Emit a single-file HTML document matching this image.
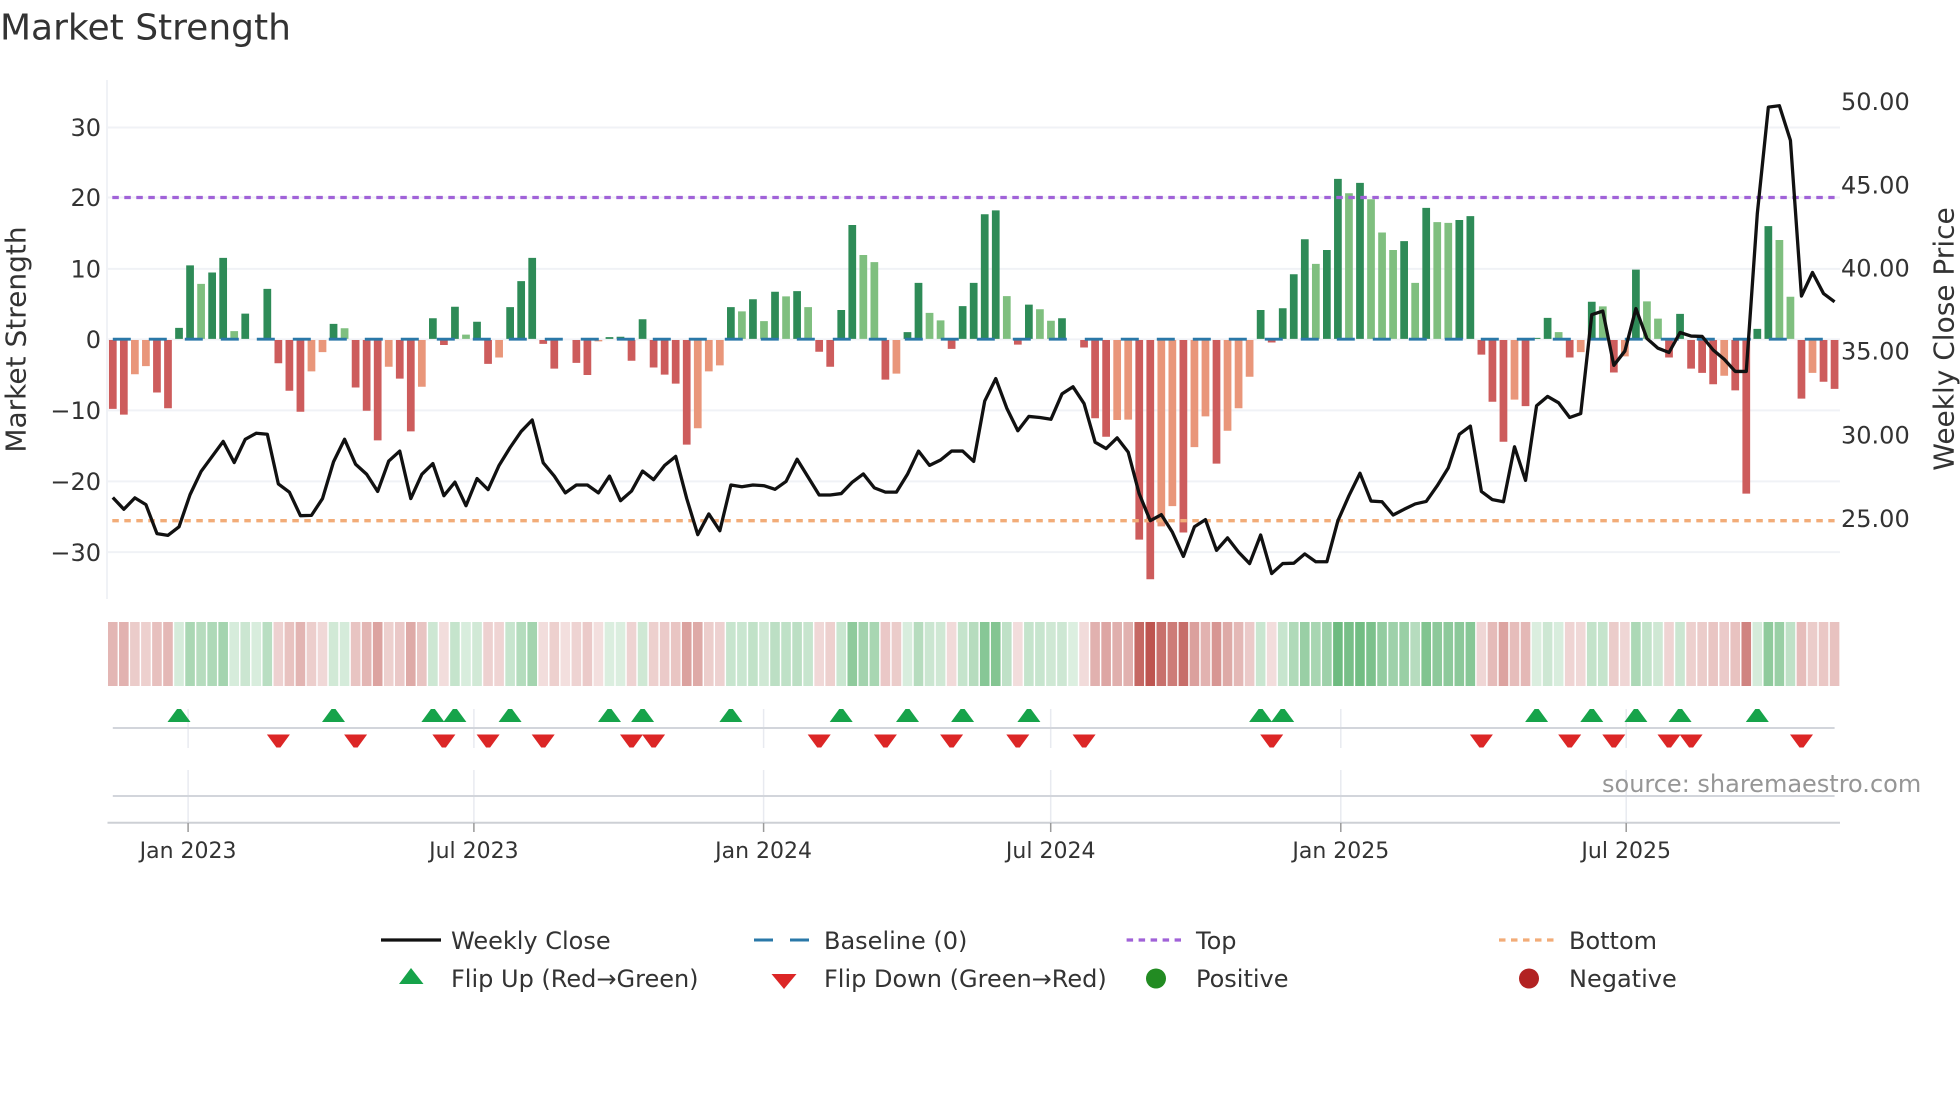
<!DOCTYPE html>
<html><head><meta charset="utf-8"><title>Market Strength</title>
<style>
html,body{margin:0;padding:0;background:#fff;width:1960px;height:1102px;overflow:hidden}
svg{display:block}
text{font-family:"DejaVu Sans","Liberation Sans",sans-serif;fill:#333}
.r{stroke:#be5550}.g{stroke:#3ea455}
</style></head><body>
<svg width="1960" height="1102" viewBox="0 0 1960 1102" xmlns="http://www.w3.org/2000/svg">
<text x="0" y="39.5" font-size="36">Market Strength</text>

<!-- grid -->
<g stroke="#f0f2f6" stroke-width="2" fill="none">
<path d="M107 127.5H1840M107 197.5H1840M107 268.9H1840M107 339.4H1840M107 410.4H1840M107 481.4H1840M107 552.1H1840"/>
<path d="M107 80V599"/>
</g>

<!-- bars -->
<g transform="translate(112.8 60) scale(11.037 .35714)" fill="none" stroke-width=".7">
<path stroke="#cd5c5c" d="M0 784V977M1 784V993M4 784V931M5 784V975M15 784V849M16 784V926M17 784V985M22 784V917M23 784V982M24 784V1065M26 784V892M27 784V1040M30 784V798M34 784V851M39 784V795M40 784V864M42 784V848M43 784V882M47 784V842M49 784V861M50 784V881M51 784V906M52 784V1077M64 784V817M65 784V859M70 784V895M76 784V809M82 784V797M88 784V805M89 784V1003M90 784V1055M93 784V1343M94 784V1454M97 784V1323M100 784V1130M105 784V791M124 784V825M125 784V957M126 784V1069M128 784V969M132 784V833M136 784V875M141 784V833M143 784V864M144 784V876M145 784V908M147 784V925M148 784V1214M153 784V948M155 784V901M156 784V921"/>
<path stroke="#e9967a" d="M2 784V880M3 784V857M18 784V872M19 784V818M25 784V859M28 784V915M35 784V833M44 784V788M53 784V1031M54 784V872M55 784V855M71 784V878M91 784V1008M92 784V1007M95 784V1306M96 784V1249M98 784V1084M99 784V998M101 784V1038M102 784V975M103 784V887M127 784V951M133 784V818M137 784V830M146 784V884M154 784V876"/>
<path stroke="#2e8b57" d="M6 781V750M7 781V575M9 781V595M10 781V554M12 781V710M14 781V641M20 781V739M29 781V723M31 781V691M33 781V733M36 781V692M37 781V619M38 781V554M45 781V776M46 781V775M48 781V726M56 781V692M58 781V670M60 781V649M62 781V647M66 781V700M67 781V462M72 781V762M73 781V624M77 781V689M78 781V624M79 781V432M80 781V421M83 781V685M86 781V723M104 781V700M106 781V695M107 781V600M108 781V502M110 781V532M111 781V333M113 781V344M117 781V507M119 781V414M122 781V448M123 781V437M129 781V778M130 781V722M134 781V677M138 781V587M142 781V711M149 781V753M150 781V465"/>
<path stroke="#7fbf7f" d="M8 781V627M11 781V759M21 781V751M32 781V769M57 781V704M59 781V731M61 781V662M63 781V692M68 781V546M69 781V566M74 781V708M75 781V729M81 781V661M84 781V698M85 781V730M109 781V571M112 781V373M114 781V390M115 781V483M116 781V532M118 781V624M120 781V454M121 781V456M131 781V762M135 781V690M139 781V676M140 781V724M151 781V504M152 781V663"/>
</g>

<!-- baseline / top / bottom -->
<path d="M112.8 339.2H1823" stroke="#2a78a8" stroke-width="2.8" stroke-dasharray="18 18" fill="none"/>
<path d="M112.3 197.5H1834.6" stroke="#a062d8" stroke-width="3.3" stroke-dasharray="6.5 5.5" fill="none"/>
<path d="M112.3 520.7H1834.6" stroke="#f2ac78" stroke-width="3.3" stroke-dasharray="6.5 5.5" fill="none"/>

<!-- weekly close line -->
<g transform="translate(112.8 60) scale(11.037 .35714)">
<polyline vector-effect="non-scaling-stroke" fill="none" stroke="#111" stroke-width="3.3" stroke-linejoin="round" points="0,1225 1,1258 2,1226 3,1245 4,1326 5,1331 6,1307 7,1217 8,1152 9,1110 10,1068 11,1127 12,1062 13,1045 14,1048 15,1187 16,1210 17,1276 18,1275 19,1228 20,1125 21,1062 22,1132 23,1160 24,1208 25,1123 26,1095 27,1228 28,1160 29,1130 30,1220 31,1182 32,1248 33,1172 34,1203 35,1135 36,1085 37,1040 38,1008 39,1128 40,1165 41,1212 42,1190 43,1190 44,1212 45,1165 46,1234 47,1207 48,1151 49,1175 50,1135 51,1110 52,1228 53,1329 54,1271 55,1318 56,1190 57,1195 58,1190 59,1192 60,1202 61,1180 62,1118 63,1168 64,1218 65,1218 66,1214 67,1182 68,1159 69,1198 70,1210 71,1210 72,1160 73,1095 74,1135 75,1120 76,1095 77,1095 78,1124 79,955 80,892 81,975 82,1038 83,998 84,1001 85,1006 86,935 87,915 88,962 89,1070 90,1088 91,1058 92,1098 93,1215 94,1290 95,1273 96,1322 97,1390 98,1307 99,1287 100,1373 101,1338 102,1378 103,1410 104,1330 105,1438 106,1410 107,1409 108,1383 109,1405 110,1405 111,1290 112,1220 113,1157 114,1235 115,1237 116,1274 117,1258 118,1243 119,1236 120,1192 121,1142 122,1048 123,1025 124,1208 125,1231 126,1237 127,1083 128,1177 129,968 130,942 131,960 132,1001 133,990 134,713 135,703 136,855 137,815 138,696 139,780 140,807 141,819 142,763 143,773 144,774 145,812 146,838 147,872 148,872 149,430 150,132 151,128 152,225 153,661 154,595 155,654 156,677"/>
</g>

<!-- y tick labels -->
<g font-size="24" text-anchor="end">
<text x="101" y="136.2">30</text>
<text x="101" y="206.2">20</text>
<text x="101" y="277.6">10</text>
<text x="101" y="348.1">0</text>
<text x="101" y="419.1">−10</text>
<text x="101" y="490.1">−20</text>
<text x="101" y="560.8">−30</text>
</g>
<g font-size="24">
<text x="1841" y="110">50.00</text>
<text x="1841" y="193.7">45.00</text>
<text x="1841" y="276.7">40.00</text>
<text x="1841" y="359.5">35.00</text>
<text x="1841" y="443.5">30.00</text>
<text x="1841" y="527">25.00</text>
</g>
<text transform="translate(25.3 339.5) rotate(-90)" font-size="28" text-anchor="middle">Market Strength</text>
<text transform="translate(1953.6 339) rotate(-90)" font-size="28" text-anchor="middle">Weekly Close Price</text>

<!-- heat strip -->
<g transform="translate(112.8 622) scale(11.037 64)" fill="none" stroke-width=".87">
<path class="r" opacity=".43" d="M0 0V1"/><path class="r" opacity=".45" d="M1 0V1"/><path class="r" opacity=".3" d="M2 0V1"/><path class="r" opacity=".28" d="M3 0V1"/><path class="r" opacity=".37" d="M4 0V1"/><path class="r" opacity=".42" d="M5 0V1"/>
<path class="g" opacity=".22" d="M6 0V1"/><path class="g" opacity=".44" d="M7 0V1"/><path class="g" opacity=".38" d="M8 0V1"/><path class="g" opacity=".42" d="M9 0V1"/><path class="g" opacity=".47" d="M10 0V1"/><path class="g" opacity=".21" d="M11 0V1"/><path class="g" opacity=".27" d="M12 0V1"/><path class="g" opacity=".2" d="M13 0V1"/><path class="g" opacity=".36" d="M14 0V1"/>
<path class="r" opacity=".27" d="M15 0V1"/><path class="r" opacity=".36" d="M16 0V1"/><path class="r" opacity=".44" d="M17 0V1"/><path class="r" opacity=".29" d="M18 0V1"/><path class="r" opacity=".23" d="M19 0V1"/>
<path class="g" opacity=".24" d="M20 0V1"/><path class="g" opacity=".22" d="M21 0V1"/>
<path class="r" opacity=".35" d="M22 0V1"/><path class="r" opacity=".43" d="M23 0V1"/><path class="r" opacity=".54" d="M24 0V1"/><path class="r" opacity=".28" d="M25 0V1"/><path class="r" opacity=".32" d="M26 0V1"/><path class="r" opacity=".5" d="M27 0V1"/><path class="r" opacity=".35" d="M28 0V1"/>
<path class="g" opacity=".26" d="M29 0V1"/><path class="r" opacity=".2" d="M30 0V1"/><path class="g" opacity=".3" d="M31 0V1"/><path class="g" opacity=".2" d="M32 0V1"/><path class="g" opacity=".24" d="M33 0V1"/>
<path class="r" opacity=".27" d="M34 0V1"/><path class="r" opacity=".25" d="M35 0V1"/>
<path class="g" opacity=".29" d="M36 0V1"/><path class="g" opacity=".39" d="M37 0V1"/><path class="g" opacity=".47" d="M38 0V1"/>
<path class="r" opacity=".2" d="M39 0V1"/><path class="r" opacity=".28" d="M40 0V1"/><path class="r" opacity=".19" d="M41 0V1"/><path class="r" opacity=".26" d="M42 0V1"/><path class="r" opacity=".31" d="M43 0V1"/><path class="r" opacity=".19" d="M44 0V1"/>
<path class="g" opacity=".19" d="M45 0V1"/><path class="g" opacity=".19" d="M46 0V1"/><path class="r" opacity=".26" d="M47 0V1"/><path class="g" opacity=".25" d="M48 0V1"/>
<path class="r" opacity=".28" d="M49 0V1"/><path class="r" opacity=".31" d="M50 0V1"/><path class="r" opacity=".34" d="M51 0V1"/><path class="r" opacity=".55" d="M52 0V1"/><path class="r" opacity=".5" d="M53 0V1"/><path class="r" opacity=".29" d="M54 0V1"/><path class="r" opacity=".27" d="M55 0V1"/>
<path class="g" opacity=".29" d="M56 0V1"/><path class="g" opacity=".28" d="M57 0V1"/><path class="g" opacity=".32" d="M58 0V1"/><path class="g" opacity=".25" d="M59 0V1"/><path class="g" opacity=".35" d="M60 0V1"/><path class="g" opacity=".33" d="M61 0V1"/><path class="g" opacity=".35" d="M62 0V1"/><path class="g" opacity=".29" d="M63 0V1"/>
<path class="r" opacity=".23" d="M64 0V1"/><path class="r" opacity=".28" d="M65 0V1"/>
<path class="g" opacity=".28" d="M66 0V1"/><path class="g" opacity=".58" d="M67 0V1"/><path class="g" opacity=".48" d="M68 0V1"/><path class="g" opacity=".45" d="M69 0V1"/>
<path class="r" opacity=".32" d="M70 0V1"/><path class="r" opacity=".3" d="M71 0V1"/>
<path class="g" opacity=".2" d="M72 0V1"/><path class="g" opacity=".38" d="M73 0V1"/><path class="g" opacity=".27" d="M74 0V1"/><path class="g" opacity=".25" d="M75 0V1"/>
<path class="r" opacity=".22" d="M76 0V1"/>
<path class="g" opacity=".3" d="M77 0V1"/><path class="g" opacity=".38" d="M78 0V1"/><path class="g" opacity=".62" d="M79 0V1"/><path class="g" opacity=".64" d="M80 0V1"/><path class="g" opacity=".33" d="M81 0V1"/>
<path class="r" opacity=".2" d="M82 0V1"/>
<path class="g" opacity=".3" d="M83 0V1"/><path class="g" opacity=".29" d="M84 0V1"/><path class="g" opacity=".25" d="M85 0V1"/><path class="g" opacity=".26" d="M86 0V1"/><path class="g" opacity=".18" d="M87 0V1"/>
<path class="r" opacity=".21" d="M88 0V1"/><path class="r" opacity=".46" d="M89 0V1"/><path class="r" opacity=".52" d="M90 0V1"/><path class="r" opacity=".47" d="M91 0V1"/><path class="r" opacity=".46" d="M92 0V1"/><path class="r" opacity=".89" d="M93 0V1"/><path class="r" opacity="1" d="M94 0V1"/><path class="r" opacity=".84" d="M95 0V1"/><path class="r" opacity=".77" d="M96 0V1"/><path class="r" opacity=".86" d="M97 0V1"/><path class="r" opacity=".56" d="M98 0V1"/><path class="r" opacity=".45" d="M99 0V1"/><path class="r" opacity=".62" d="M100 0V1"/><path class="r" opacity=".5" d="M101 0V1"/><path class="r" opacity=".42" d="M102 0V1"/><path class="r" opacity=".31" d="M103 0V1"/>
<path class="g" opacity=".28" d="M104 0V1"/><path class="r" opacity=".2" d="M105 0V1"/>
<path class="g" opacity=".29" d="M106 0V1"/><path class="g" opacity=".41" d="M107 0V1"/><path class="g" opacity=".53" d="M108 0V1"/><path class="g" opacity=".45" d="M109 0V1"/><path class="g" opacity=".5" d="M110 0V1"/><path class="g" opacity=".75" d="M111 0V1"/><path class="g" opacity=".7" d="M112 0V1"/><path class="g" opacity=".73" d="M113 0V1"/><path class="g" opacity=".68" d="M114 0V1"/><path class="g" opacity=".56" d="M115 0V1"/><path class="g" opacity=".5" d="M116 0V1"/><path class="g" opacity=".53" d="M117 0V1"/><path class="g" opacity=".38" d="M118 0V1"/><path class="g" opacity=".65" d="M119 0V1"/><path class="g" opacity=".59" d="M120 0V1"/><path class="g" opacity=".59" d="M121 0V1"/><path class="g" opacity=".6" d="M122 0V1"/><path class="g" opacity=".62" d="M123 0V1"/>
<path class="r" opacity=".24" d="M124 0V1"/><path class="r" opacity=".4" d="M125 0V1"/><path class="r" opacity=".54" d="M126 0V1"/><path class="r" opacity=".39" d="M127 0V1"/><path class="r" opacity=".42" d="M128 0V1"/>
<path class="g" opacity=".19" d="M129 0V1"/><path class="g" opacity=".26" d="M130 0V1"/><path class="g" opacity=".2" d="M131 0V1"/>
<path class="r" opacity=".25" d="M132 0V1"/><path class="r" opacity=".23" d="M133 0V1"/>
<path class="g" opacity=".31" d="M134 0V1"/><path class="g" opacity=".3" d="M135 0V1"/>
<path class="r" opacity=".3" d="M136 0V1"/><path class="r" opacity=".24" d="M137 0V1"/>
<path class="g" opacity=".43" d="M138 0V1"/><path class="g" opacity=".31" d="M139 0V1"/><path class="g" opacity=".25" d="M140 0V1"/>
<path class="r" opacity=".25" d="M141 0V1"/><path class="g" opacity=".27" d="M142 0V1"/>
<path class="r" opacity=".28" d="M143 0V1"/><path class="r" opacity=".3" d="M144 0V1"/><path class="r" opacity=".34" d="M145 0V1"/><path class="r" opacity=".31" d="M146 0V1"/><path class="r" opacity=".36" d="M147 0V1"/><path class="r" opacity=".72" d="M148 0V1"/>
<path class="g" opacity=".22" d="M149 0V1"/><path class="g" opacity=".58" d="M150 0V1"/><path class="g" opacity=".53" d="M151 0V1"/><path class="g" opacity=".33" d="M152 0V1"/>
<path class="r" opacity=".39" d="M153 0V1"/><path class="r" opacity=".3" d="M154 0V1"/><path class="r" opacity=".33" d="M155 0V1"/><path class="r" opacity=".36" d="M156 0V1"/>
</g>

<!-- marker panel grid -->
<g stroke="#e8eaf0" stroke-width="1.5" fill="none">
<path d="M188.1 709V748M473.9 709V748M763.6 709V748M1050.7 709V748M1340.8 709V748M1626.2 709V748"/>
<path d="M188.1 770V823M473.9 770V823M763.6 770V823M1050.7 770V823M1340.8 770V823M1626.2 770V823"/>
</g>
<path d="M112.8 728H1834.6M112.8 796H1834.6" stroke="#d2d5db" stroke-width="2" fill="none"/>
<path d="M107.5 822.7H1840" stroke="#cdd0d5" stroke-width="2" fill="none"/>
<path d="M188.1 823V832M473.9 823V832M763.6 823V832M1050.7 823V832M1340.8 823V832M1626.2 823V832" stroke="#9a9a9a" stroke-width="1.5" fill="none"/>

<!-- flip markers -->
<defs>
<path id="u" d="M-11.5 6.5L-2 -6.5H2L11.5 6.5Z" fill="#16a34a"/>
<path id="d" d="M-11.5 -6.5H11.5L2 6.5H-2Z" fill="#dc2626"/>
</defs>
<g>
<use href="#u" x="179" y="715.5"/><use href="#u" x="333.5" y="715.5"/><use href="#u" x="432.9" y="715.5"/><use href="#u" x="454.9" y="715.5"/><use href="#u" x="510.1" y="715.5"/><use href="#u" x="609.5" y="715.5"/><use href="#u" x="642.6" y="715.5"/><use href="#u" x="730.9" y="715.5"/><use href="#u" x="841.2" y="715.5"/><use href="#u" x="907.5" y="715.5"/><use href="#u" x="962.6" y="715.5"/><use href="#u" x="1028.9" y="715.5"/><use href="#u" x="1260.6" y="715.5"/><use href="#u" x="1282.7" y="715.5"/><use href="#u" x="1536.6" y="715.5"/><use href="#u" x="1591.8" y="715.5"/><use href="#u" x="1635.9" y="715.5"/><use href="#u" x="1680.1" y="715.5"/><use href="#u" x="1757.3" y="715.5"/>
<use href="#d" x="278.4" y="741"/><use href="#d" x="355.6" y="741"/><use href="#d" x="443.9" y="741"/><use href="#d" x="488.1" y="741"/><use href="#d" x="543.2" y="741"/><use href="#d" x="631.5" y="741"/><use href="#d" x="653.6" y="741"/><use href="#d" x="819.2" y="741"/><use href="#d" x="885.4" y="741"/><use href="#d" x="951.6" y="741"/><use href="#d" x="1017.8" y="741"/><use href="#d" x="1084.1" y="741"/><use href="#d" x="1271.7" y="741"/><use href="#d" x="1481.4" y="741"/><use href="#d" x="1569.7" y="741"/><use href="#d" x="1613.8" y="741"/><use href="#d" x="1669" y="741"/><use href="#d" x="1691.1" y="741"/><use href="#d" x="1801.5" y="741"/>
</g>

<!-- x labels -->
<g font-size="22" text-anchor="middle">
<text x="188.1" y="858">Jan 2023</text>
<text x="473.9" y="858">Jul 2023</text>
<text x="763.6" y="858">Jan 2024</text>
<text x="1050.7" y="858">Jul 2024</text>
<text x="1340.8" y="858">Jan 2025</text>
<text x="1626.2" y="858">Jul 2025</text>
</g>
<text x="1602" y="792" font-size="24" style="fill:#969696">source: sharemaestro.com</text>

<!-- legend -->
<path d="M381 940H441" stroke="#111" stroke-width="3.3" fill="none"/>
<path d="M754 940H773M790 940H809" stroke="#2a78a8" stroke-width="3" fill="none"/>
<path d="M1126.6 940H1181" stroke="#a062d8" stroke-width="3.3" stroke-dasharray="6.5 5.5" fill="none"/>
<path d="M1499 940H1554" stroke="#f2ac78" stroke-width="3.3" stroke-dasharray="6.5 5.5" fill="none"/>
<path d="M411 968L423.5 984H399Z" fill="#16a34a"/>
<path d="M784 989L796.5 974H771.5Z" fill="#dc2626"/>
<circle cx="1156" cy="978.5" r="10" fill="#228b22"/>
<circle cx="1529" cy="978.5" r="10" fill="#b22222"/>
<g font-size="24">
<text x="451" y="949">Weekly Close</text>
<text x="824" y="949">Baseline (0)</text>
<text x="1196" y="949">Top</text>
<text x="1569" y="949">Bottom</text>
<text x="451" y="987">Flip Up (Red→Green)</text>
<text x="824" y="987">Flip Down (Green→Red)</text>
<text x="1196" y="987">Positive</text>
<text x="1569" y="987">Negative</text>
</g>
</svg>
</body></html>
